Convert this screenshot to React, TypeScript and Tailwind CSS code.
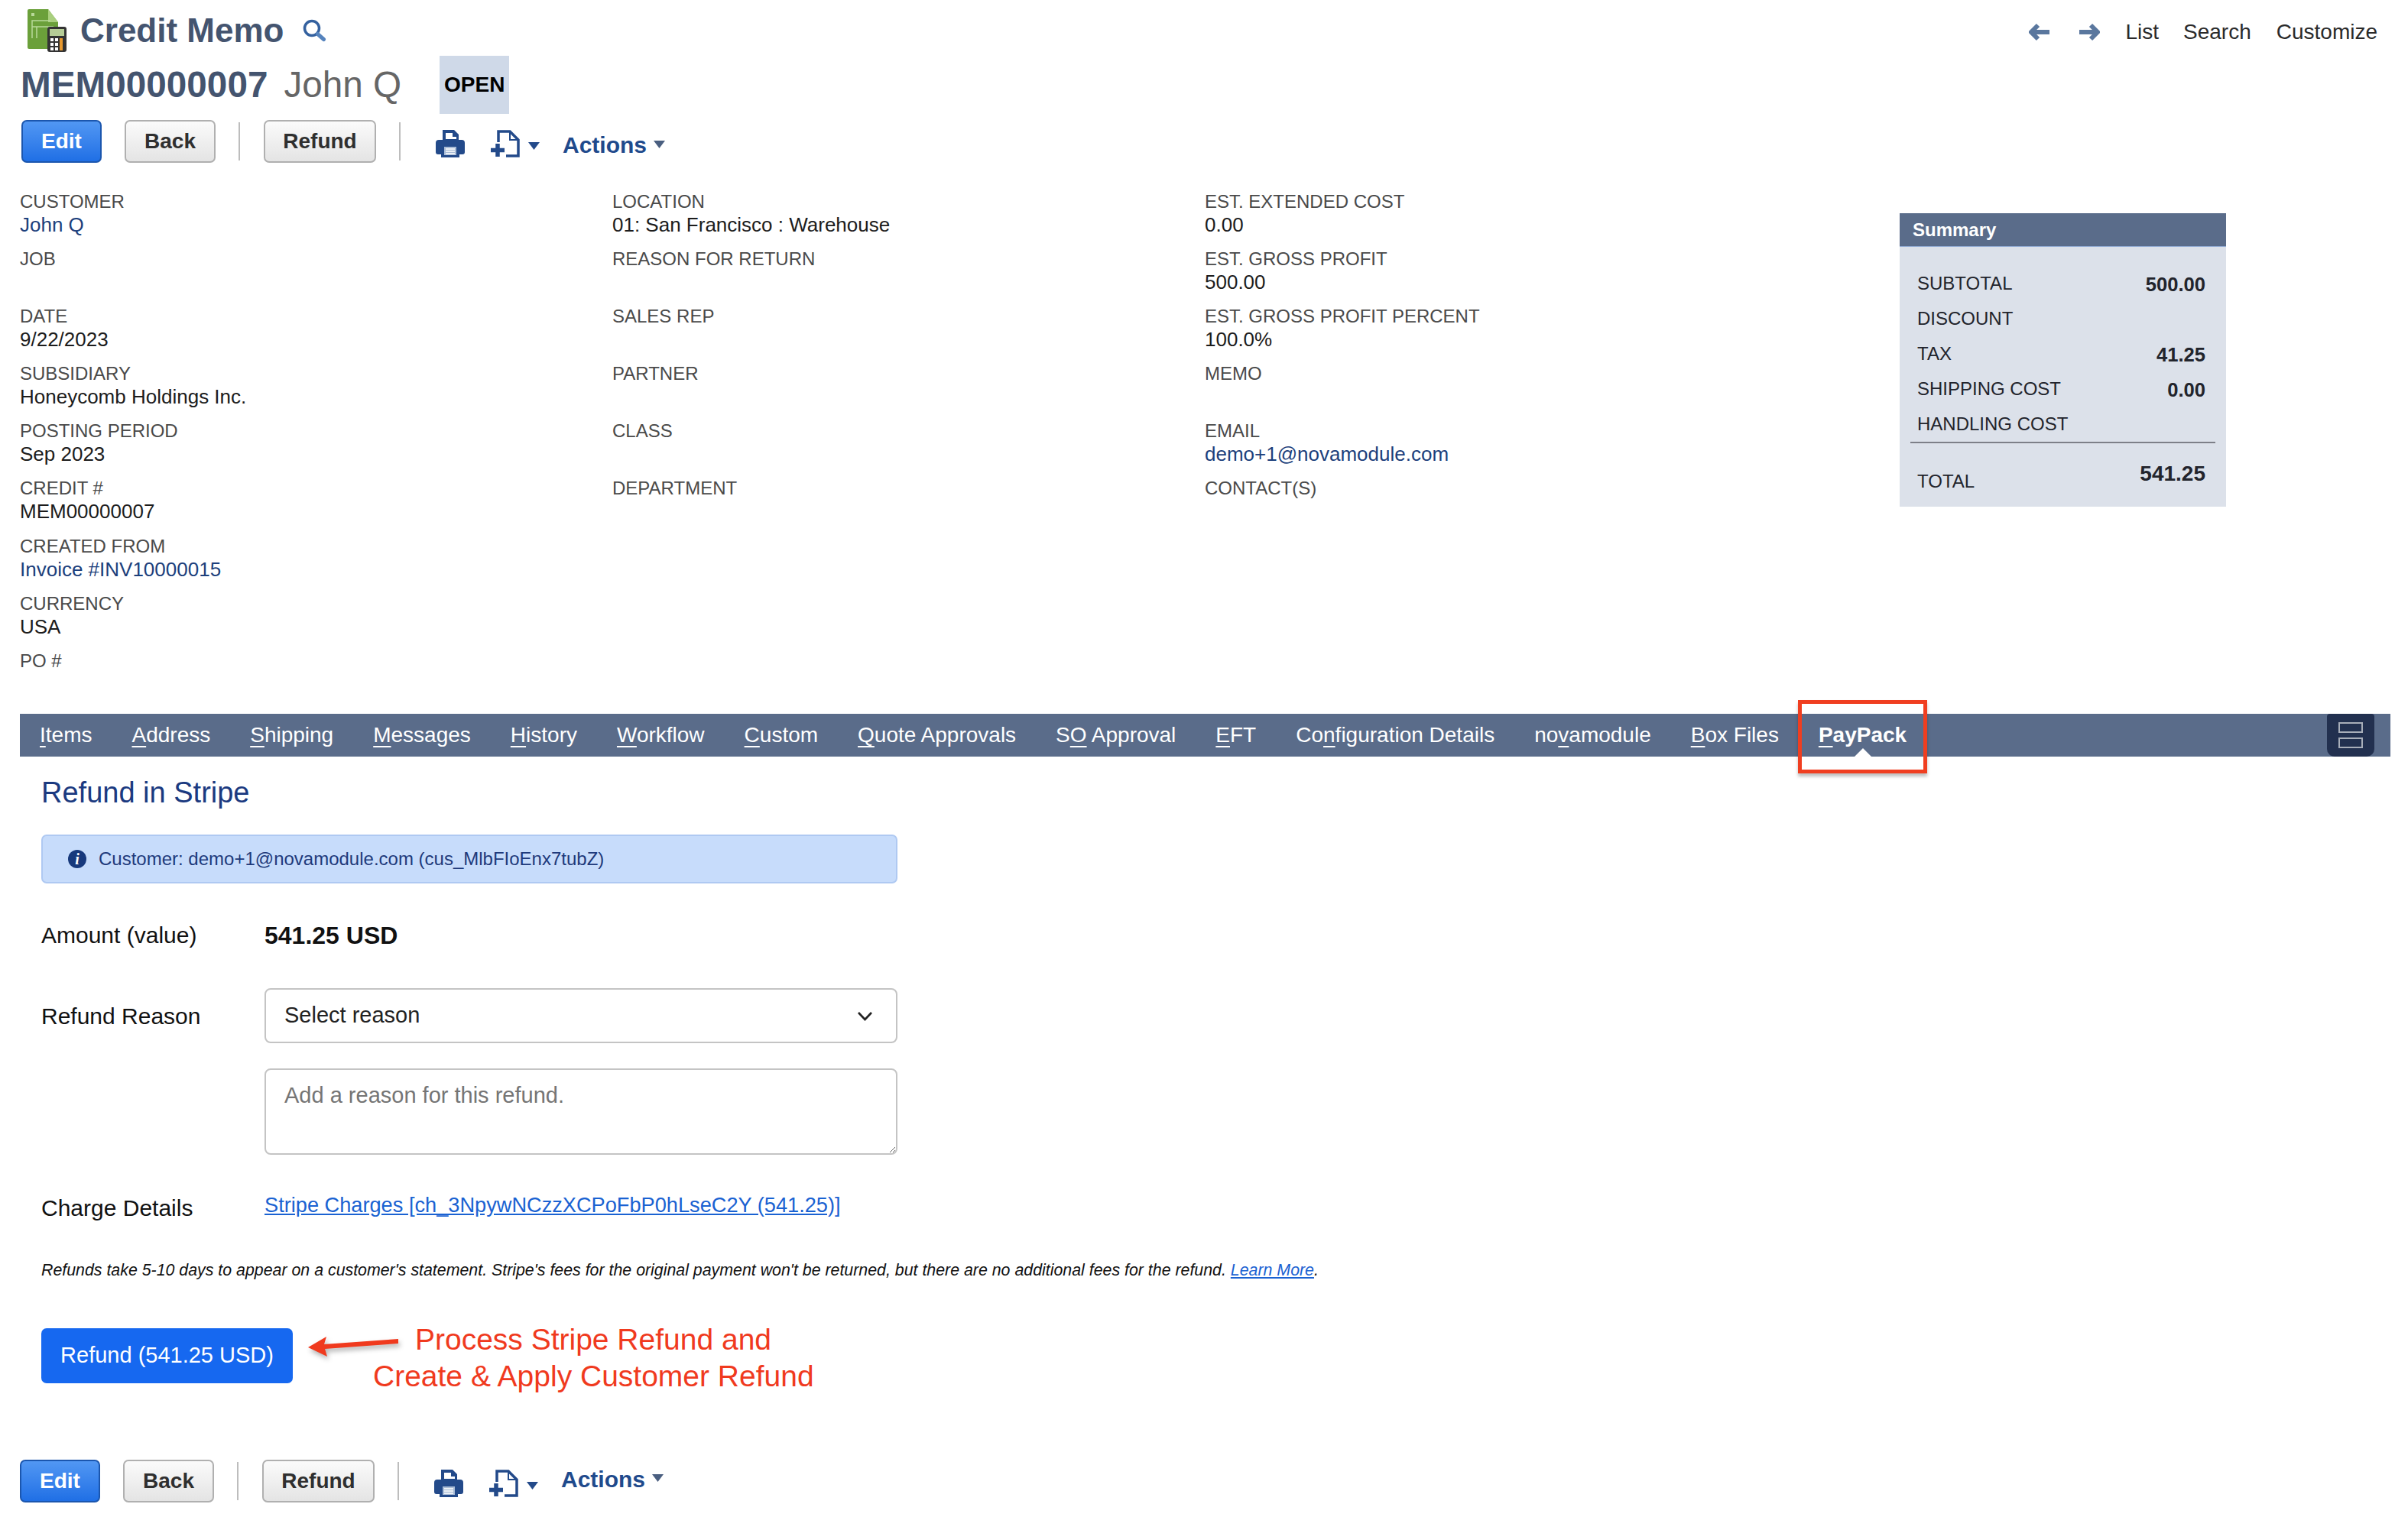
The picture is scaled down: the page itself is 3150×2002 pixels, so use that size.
import React from "react";

const tabs = [
  ["", "I", "tems"],
  ["", "A", "ddress"],
  ["", "S", "hipping"],
  ["", "M", "essages"],
  ["", "H", "istory"],
  ["", "W", "orkflow"],
  ["", "C", "ustom"],
  ["", "Q", "uote Approvals"],
  ["S", "O", " Approval"],
  ["", "E", "FT"],
  ["Co", "n", "figuration Details"],
  ["no", "v", "amodule"],
  ["", "B", "ox Files"],
];

const col1 = [
  { label: "CUSTOMER", value: "John Q", link: true },
  { label: "JOB" },
  { label: "DATE", value: "9/22/2023" },
  { label: "SUBSIDIARY", value: "Honeycomb Holdings Inc." },
  { label: "POSTING PERIOD", value: "Sep 2023" },
  { label: "CREDIT #", value: "MEM00000007" },
  { label: "CREATED FROM", value: "Invoice #INV10000015", link: true },
  { label: "CURRENCY", value: "USA" },
  { label: "PO #" },
];

const col2 = [
  { label: "LOCATION", value: "01: San Francisco : Warehouse" },
  { label: "REASON FOR RETURN" },
  { label: "SALES REP" },
  { label: "PARTNER" },
  { label: "CLASS" },
  { label: "DEPARTMENT" },
];

const col3 = [
  { label: "EST. EXTENDED COST", value: "0.00" },
  { label: "EST. GROSS PROFIT", value: "500.00" },
  { label: "EST. GROSS PROFIT PERCENT", value: "100.0%" },
  { label: "MEMO" },
  { label: "EMAIL", value: "demo+1@novamodule.com", link: true },
  { label: "CONTACT(S)" },
];

const summary = [
  { label: "SUBTOTAL", value: "500.00" },
  { label: "DISCOUNT", value: "" },
  { label: "TAX", value: "41.25" },
  { label: "SHIPPING COST", value: "0.00" },
  { label: "HANDLING COST", value: "" },
];

type FieldData = { label: string; value?: string; link?: boolean };

const FieldColumn = ({ fields, width }: { fields: FieldData[]; width: string }) => (
  <div className={width}>
    {fields.map((f) => (
      <div key={f.label} className="h-[75.1px]">
        <div className="text-[24px] leading-[30px] text-[#4a4a4a]">{f.label}</div>
        {f.value ? (
          <div className={f.link ? "text-[26px] leading-[30px] text-[#1c3f7c]" : "text-[26px] leading-[30px] text-[#1c1c1c]"}>
            {f.value}
          </div>
        ) : null}
      </div>
    ))}
  </div>
);

const CreditMemoIcon = () => (
  <svg width="52" height="57" viewBox="0 0 52 57">
    <path d="M3 1h25l13 17v33a2 2 0 0 1-2 2H3a2 2 0 0 1-2-2V3a2 2 0 0 1 2-2z" fill="#6ba03a" />
    <path d="M28 1l13 17H28z" fill="#a9cf7e" />
    <rect x="6" y="6" width="4" height="4" fill="#b9d99a" />
    <path d="M7 39V16h24M7 24h28M13 24v15M28 24v14" stroke="#b9d99a" strokeWidth="1.5" fill="none" />
    <rect x="27" y="24" width="25" height="33" rx="3" fill="#333" />
    <rect x="30" y="27" width="19" height="9" fill="#b5cc96" />
    <g fill="#fff">
      <rect x="31" y="39" width="4" height="4" />
      <rect x="37" y="39" width="4" height="4" />
      <rect x="31" y="45" width="4" height="4" />
      <rect x="37" y="45" width="4" height="4" />
      <rect x="31" y="51" width="4" height="4" />
      <rect x="37" y="51" width="4" height="4" />
    </g>
    <rect x="43" y="39" width="4" height="16" fill="#e8992f" />
  </svg>
);

const SearchIcon = () => (
  <svg width="31" height="30" viewBox="0 0 31 30" fill="none">
    <circle cx="12" cy="12" r="9.5" stroke="#34619f" strokeWidth="3.5" />
    <path d="M19.5 19.5l8 7" stroke="#5583bd" strokeWidth="5" strokeLinecap="round" />
  </svg>
);

const PrintIcon = () => (
  <svg width="38" height="36" viewBox="0 0 38 36">
    <path d="M9 0h15l6 6v8H9z" fill="#234a8a" />
    <path d="M13 4h9v5h5v3H13z" fill="#fff" />
    <path d="M4 13h30a4 4 0 0 1 4 4v12a3 3 0 0 1-3 3h-4V20H7v12H3a3 3 0 0 1-3-3V17a4 4 0 0 1 4-4z" fill="#234a8a" />
    <path d="M7 19h24v17H7z" fill="#234a8a" />
    <path d="M11 22h16v11H11z" fill="#a9bcd6" />
    <path d="M13 25h12M13 28h12M13 31h12" stroke="#fff" strokeWidth="1.4" />
  </svg>
);

const NewDocIcon = () => (
  <svg width="42" height="36" viewBox="0 0 42 36" fill="none">
    <path d="M12 16V2h15l11 11v21H22" stroke="#234a8a" strokeWidth="3.5" />
    <path d="M27 2v11h11" stroke="#234a8a" strokeWidth="2" />
    <path d="M11 18v17M2 26.5h18" stroke="#234a8a" strokeWidth="5.5" />
  </svg>
);

const Caret = ({ color }: { color: string }) => (
  <svg width="15" height="10" viewBox="0 0 15 10">
    <path d="M0 0h15L7.5 10z" fill={color} />
  </svg>
);

const NavArrow = ({ flip }: { flip?: boolean }) => (
  <svg width="29" height="24" viewBox="0 0 29 24" fill="none" className={flip ? "-scale-x-100" : ""}>
    <path d="M12 3L3 12l9 9M4 12h23" stroke="#5a779e" strokeWidth="6" strokeLinejoin="round" />
  </svg>
);

const Toolbar = ({ className, actionsClass, caretClass }: { className: string; actionsClass: string; caretClass: string }) => (
  <div className={className}>
    <button className="h-[56px] w-[105px] rounded-[7px] border-2 border-[#1b56ae] bg-gradient-to-b from-[#5197f3] to-[#1f6fe5] text-[28px] font-bold text-white">
      Edit
    </button>
    <button className="ml-[30px] h-[56px] w-[119px] rounded-[7px] border-2 border-[#b0b0b0] bg-gradient-to-b from-[#fbfbfb] to-[#e4e4e4] text-[28px] font-bold text-[#2f2f2f]">
      Back
    </button>
    <div className="ml-[30px] h-[50px] w-[2px] bg-[#bdbdbd]" />
    <button className="ml-[31px] h-[56px] w-[147px] rounded-[7px] border-2 border-[#b0b0b0] bg-gradient-to-b from-[#fbfbfb] to-[#e4e4e4] text-[28px] font-bold text-[#2f2f2f]">
      Refund
    </button>
    <div className="ml-[30px] h-[50px] w-[2px] bg-[#bdbdbd]" />
    <div className="ml-[46px] mt-[6px]">
      <PrintIcon />
    </div>
    <div className="ml-[32px] mt-[6px]">
      <NewDocIcon />
    </div>
    <div className="ml-[9px] mt-[12px]">
      <Caret color="#234a8a" />
    </div>
    <span className={actionsClass}>Actions</span>
    <div className={caretClass}>
      <Caret color="#4a5f80" />
    </div>
  </div>
);

const App = () => {
  return (
    <div className="w-[3150px] h-[2002px] overflow-hidden bg-white font-['Liberation_Sans',Arial,sans-serif] text-[#1c1c1c]">
      {/* header */}
      <div className="flex h-[73px] items-center justify-between pl-[35px] pr-[40px] pt-[6px]">
        <div className="flex items-center">
          <CreditMemoIcon />
          <span className="ml-[18px] text-[44px] font-bold text-[#44546f]">Credit Memo</span>
          <div className="ml-[25px]">
            <SearchIcon />
          </div>
        </div>
        <div className="mt-[5px] flex items-center text-[28px] text-[#2a2a2a]">
          <NavArrow />
          <div className="ml-[35px]">
            <NavArrow flip />
          </div>
          <span className="ml-[33px]">List</span>
          <span className="ml-[32px]">Search</span>
          <span className="ml-[33px]">Customize</span>
        </div>
      </div>
      <div className="flex h-[76px] items-center pl-[27px]">
        <span className="text-[47.7px] font-bold text-[#44546f]">MEM00000007</span>
        <span className="ml-[21px] text-[47.7px] text-[#666666]">John Q</span>
        <div className="ml-[50px] flex h-[76px] w-[91px] items-center justify-center bg-[#cfd9e8] text-[28px] font-bold text-black">
          OPEN
        </div>
      </div>
      <Toolbar
        className="ml-[28px] mt-[8px] flex h-[56px] items-center"
        actionsClass="ml-[30px] mt-[9px] text-[30px] font-bold text-[#1f4a8c]"
        caretClass="ml-[9px] mt-[7px]"
      />

      {/* fields + summary */}
      <div className="mt-[36px] flex h-[685px] pl-[26px]">
        <FieldColumn fields={col1} width="w-[775px]" />
        <FieldColumn fields={col2} width="w-[775px]" />
        <FieldColumn fields={col3} width="w-[909px]" />
        <div className="mt-[30px] h-[384px] w-[427px] bg-[#dce1ea]">
          <div className="flex h-[44px] items-center border-b border-[#8fa9d2] bg-[#5a6c8a] pl-[17px] text-[24px] font-bold text-white">
            Summary
          </div>
          <div className="px-[14px] pt-[25px]">
            {summary.map((row) => (
              <div key={row.label} className="flex h-[46px] items-center justify-between pl-[9px] pr-[13px] text-[24px] text-[#22242c]">
                <span>{row.label}</span>
                <span className="mt-[2px] text-[25.6px] font-bold">{row.value}</span>
              </div>
            ))}
            <div className="h-[2px] bg-[#7d7f88]" />
            <div className="flex justify-between pl-[9px] pr-[13px] pt-[19px] text-[#22242c]">
              <span className="mt-[13px] text-[24px]">TOTAL</span>
              <span className="text-[28px] font-bold">541.25</span>
            </div>
          </div>
        </div>
      </div>

      {/* tab bar */}
      <div className="relative mx-[26px] flex h-[56px] w-[3101px] items-center justify-between bg-[#5a6c8a] pr-[21px]">
        <div className="flex items-center text-[28px] text-white">
          {tabs.map((t) => (
            <span key={t.join("")} className="px-[26px] whitespace-pre">
              {t[0]}
              <u className="underline-offset-[5px]">{t[1]}</u>
              {t[2]}
            </span>
          ))}
          <span className="relative px-[26px] font-bold">
            <u className="underline-offset-[5px]">P</u>ayPack
            <div className="absolute bottom-[-29px] left-[-1px] right-[-1px] top-[-25px] border-[5px] border-[#f03e20] shadow-[0_4px_4px_rgba(0,0,0,0.25)]" />
            <div className="absolute bottom-[-7px] left-1/2 h-0 w-0 -translate-x-1/2 border-x-[11px] border-b-[11px] border-x-transparent border-b-white" />
          </span>
        </div>
        <div className="flex h-[56px] w-[62px] flex-col items-center justify-center gap-[6px] rounded-b-[10px] rounded-t-[4px] bg-[#22304f]">
          <div className="h-[14px] w-[32px] border-2 border-[#a8aeb9]" />
          <div className="h-[14px] w-[32px] border-2 border-[#a8aeb9]" />
        </div>
      </div>

      {/* refund form */}
      <div className="pl-[54px]">
        <h2 className="mt-[25px] text-[38px] leading-[44px] text-[#1b3a80]">Refund in Stripe</h2>
        <div className="mt-[33px] flex h-[64px] w-[1120px] items-center rounded-[7px] border-2 border-[#afc9f2] bg-[#c7dcfb] pl-[33px] text-[24px] text-[#1e3a7b]">
          <span className="flex h-[24px] w-[24px] items-center justify-center rounded-full bg-[#17397c] font-['Liberation_Serif',serif] text-[20px] font-bold italic text-white">
            i
          </span>
          <span className="ml-[16px]">Customer: demo+1@novamodule.com (cus_MlbFIoEnx7tubZ)</span>
        </div>
        <div className="mt-[50px] grid grid-cols-[292px_828px]">
          <span className="text-[30px] leading-[36px] text-[#111111]">Amount (value)</span>
          <span className="text-[32px] font-bold leading-[36px] text-[#111111]">541.25 USD</span>
          <span className="mt-[51px] flex h-[72px] items-center text-[30px] text-[#111111]">Refund Reason</span>
          <div className="mt-[51px] flex h-[72px] items-center justify-between rounded-[8px] border-2 border-[#c4c4c4] pl-[24px] pr-[30px] text-[29px] text-[#222222]">
            Select reason
            <svg width="21" height="13" viewBox="0 0 21 13" fill="none">
              <path d="M2 2l8.5 9L19 2" stroke="#222222" strokeWidth="2.6" />
            </svg>
          </div>
          <div />
          <textarea
            placeholder="Add a reason for this refund."
            className="mt-[33px] h-[113px] rounded-[8px] border-2 border-[#c4c4c4] px-[24px] py-[15px] text-[29px] leading-[36px] text-[#222222] placeholder:text-[#757575]"
          />
          <span className="mt-[52px] text-[30px] leading-[36px] text-[#111111]">Charge Details</span>
          <a className="mt-[48px] text-[27.2px] leading-[36px] text-[#1a62d2] underline">
            Stripe Charges [ch_3NpywNCzzXCPoFbP0hLseC2Y (541.25)]
          </a>
        </div>
        <p className="mt-[48px] text-[21.35px] italic leading-[30px] text-[#111111]">
          Refunds take 5-10 days to appear on a customer's statement. Stripe's fees for the original payment won't be returned, but there are no additional fees for the refund.{" "}
          <a className="text-[#1a62d2] underline">Learn More</a>.
        </p>
        <div className="relative mt-[61px] h-[72px]">
          <button className="h-[72px] w-[329px] rounded-[7px] bg-[#1668f0] text-[29px] text-white">Refund (541.25 USD)</button>
          <svg width="125" height="44" viewBox="0 0 125 44" className="absolute left-[346px] top-[4px] drop-shadow-[2px_4px_3px_rgba(0,0,0,0.3)]">
            <path d="M3 21L27 7l-3 10 97-7v6l-96 7 3 10z" fill="#f03a1e" />
          </svg>
          <div className="absolute left-[434px] top-[-9px] w-[576px] whitespace-nowrap text-center text-[39px] leading-[48px] text-[#f03a1e]">
            Process Stripe Refund and
            <br />
            Create &amp; Apply Customer Refund
          </div>
        </div>
      </div>

      <Toolbar
        className="ml-[26px] mt-[100px] flex h-[56px] items-center"
        actionsClass="ml-[30px] mt-[-6px] text-[30px] font-bold text-[#1f4a8c]"
        caretClass="ml-[9px] mt-[-8px]"
      />
    </div>
  );
};

export default App;
